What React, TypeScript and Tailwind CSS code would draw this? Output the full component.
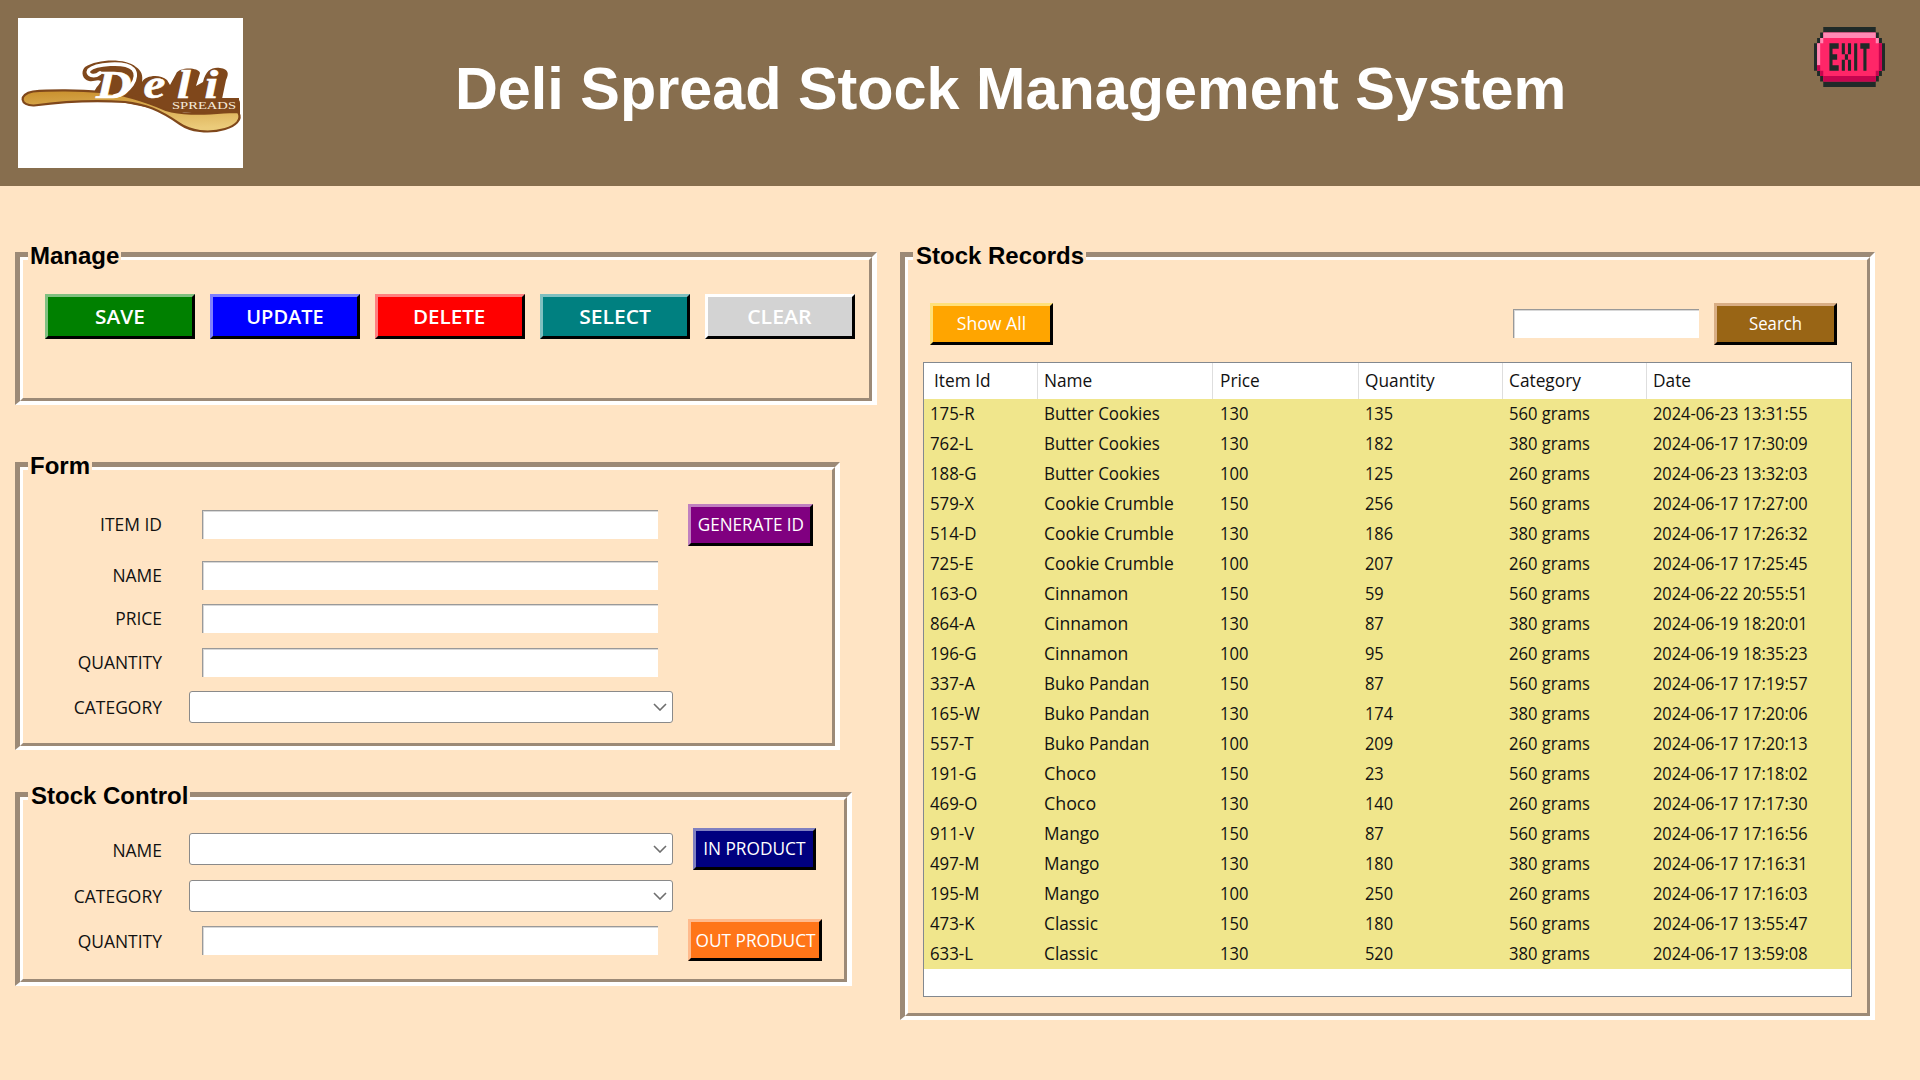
import type { ReactNode } from "react";

const rows: string[][] = [
  ["175-R", "Butter Cookies", "130", "135", "560 grams", "2024-06-23 13:31:55"],
  ["762-L", "Butter Cookies", "130", "182", "380 grams", "2024-06-17 17:30:09"],
  ["188-G", "Butter Cookies", "100", "125", "260 grams", "2024-06-23 13:32:03"],
  ["579-X", "Cookie Crumble", "150", "256", "560 grams", "2024-06-17 17:27:00"],
  ["514-D", "Cookie Crumble", "130", "186", "380 grams", "2024-06-17 17:26:32"],
  ["725-E", "Cookie Crumble", "100", "207", "260 grams", "2024-06-17 17:25:45"],
  ["163-O", "Cinnamon", "150", "59", "560 grams", "2024-06-22 20:55:51"],
  ["864-A", "Cinnamon", "130", "87", "380 grams", "2024-06-19 18:20:01"],
  ["196-G", "Cinnamon", "100", "95", "260 grams", "2024-06-19 18:35:23"],
  ["337-A", "Buko Pandan", "150", "87", "560 grams", "2024-06-17 17:19:57"],
  ["165-W", "Buko Pandan", "130", "174", "380 grams", "2024-06-17 17:20:06"],
  ["557-T", "Buko Pandan", "100", "209", "260 grams", "2024-06-17 17:20:13"],
  ["191-G", "Choco", "150", "23", "560 grams", "2024-06-17 17:18:02"],
  ["469-O", "Choco", "130", "140", "260 grams", "2024-06-17 17:17:30"],
  ["911-V", "Mango", "150", "87", "560 grams", "2024-06-17 17:16:56"],
  ["497-M", "Mango", "130", "180", "380 grams", "2024-06-17 17:16:31"],
  ["195-M", "Mango", "100", "250", "260 grams", "2024-06-17 17:16:03"],
  ["473-K", "Classic", "150", "180", "560 grams", "2024-06-17 13:55:47"],
  ["633-L", "Classic", "130", "520", "380 grams", "2024-06-17 13:59:08"],
];

const columns = "grid grid-cols-[114px_175px_146px_144px_144px_1fr]";

const nameWidths: Record<string, string> = {
  "Butter Cookies": "scale-x-[0.94]",
  "Cookie Crumble": "scale-x-[0.97]",
  Cinnamon: "scale-x-[0.975]",
  "Buko Pandan": "scale-x-[0.945]",
  Choco: "scale-x-[0.99]",
  Mango: "scale-x-[0.96]",
  Classic: "scale-x-[0.96]",
};

const columnWidths = [
  "scale-x-[0.935]",
  "",
  "scale-x-[0.92]",
  "scale-x-[0.91]",
  "scale-x-[0.92]",
  "scale-x-[0.91]",
];

function Group({
  title,
  className,
  legend = "pl-[2px]",
  children,
}: {
  title: string;
  className: string;
  legend?: string;
  children: ReactNode;
}) {
  return (
    <section
      className={`relative border-t-[5px] border-l-[5px] border-r-[5px] border-b-[4px] border-t-[#9c8a77] border-l-[#9c8a77] border-r-white border-b-white ${className}`}
    >
      <h2
        className={`absolute -top-[16px] left-[8px] h-[30px] bg-[#ffe4c4] pr-[2px] font-['Liberation_Sans',sans-serif] text-[24px] leading-[30px] font-bold whitespace-nowrap text-black ${legend}`}
      >
        {title}
      </h2>
      <div className="h-full border-[3px] border-t-white border-l-white border-r-[#9c8a77] border-b-[#9c8a77]">
        {children}
      </div>
    </section>
  );
}

function Button({ className, text = "", children }: { className: string; text?: string; children: string }) {
  return (
    <button
      className={`flex shrink-0 items-center justify-center border-[3px] border-r-black border-b-black whitespace-nowrap text-white ${className}`}
    >
      <span className={`block ${text}`}>{children}</span>
    </button>
  );
}

function Label({ className = "", children }: { className?: string; children: string }) {
  return (
    <label className={`w-[139px] shrink-0 origin-right scale-x-[0.97] text-right ${className}`}>{children}</label>
  );
}

function Entry({ className }: { className: string }) {
  return (
    <div
      className={`h-[29px] shrink-0 border-t border-l border-t-[#999] border-l-[#999] bg-white shadow-[inset_1px_1px_0_#d8d8d8] ${className}`}
    />
  );
}

function Combo() {
  return (
    <div className="ml-[27px] flex h-[32px] w-[484px] shrink-0 items-center justify-end rounded-[3px] border border-[#8a8a8a] bg-white pr-[5px]">
      <svg width="14" height="8" viewBox="0 0 14 8" fill="none" stroke="#6e6e6e" strokeWidth="1.6">
        <path d="M1 1l6 6 6-6" />
      </svg>
    </div>
  );
}

function Logo() {
  return (
    <svg width="225" height="150" viewBox="18 18 225 150" className="bg-white">
      <defs>
        <linearGradient id="gold" x1="0" y1="0" x2="0.15" y2="1">
          <stop offset="0" stopColor="#c98f2c" />
          <stop offset="1" stopColor="#ebcb7a" />
        </linearGradient>
      </defs>
      <path
        d="M95 90C97 86 100 84 101 81C97 79 94 82 89 81C83 80 80 72 85 67C98 59 125 58 136 67C142 71 143 76 142 82C146 75 160 74 167 80L170 85L176 74C179 67 198 67 200 73L196 86L203 82C206 70 212 67 220 68C229 69 229 74 226 80L222 99H236Q240 99 240 103V118L200 114L150 108L92 96Z"
        fill="#7f471b"
      />
      <path
        d="M33 91.500C50 90 80 90 100 92C125 94 145 101 166 110C188 117 215 112 238 112C243 120 235 126 225 129C208 134 190 131 180 124C160 110 145 104 125 102C95 100 60 102 34 105.500C20 106 18 94 33 91.500Z"
        fill="url(#gold)"
        stroke="#7f471b"
        strokeWidth="2.200"
      />
      <path d="M150 92L170 98H239V112H174L130 97Z" fill="#7f471b" />
      <path
        d="M100 73C94 78 86 75 89 70C95 64 125 61 133 69C140 77 130 93 114 96"
        fill="none"
        stroke="#fff"
        strokeWidth="3.600"
        strokeLinecap="round"
      />
      <text
        transform="translate(96 97.500) scale(1.2 1)"
        x="0 39.500 67.500 90.500"
        y="0"
        fontSize="41"
        fill="#fff"
        stroke="#fff"
        strokeWidth="0.600"
        fontFamily="'Liberation Serif', serif"
        fontStyle="italic"
        fontWeight="700"
      >
        Deli
      </text>
      <text
        x="172"
        y="109"
        fontSize="10.500"
        fill="#f6ead8"
        fontFamily="'Liberation Serif', serif"
        textLength="64"
        lengthAdjust="spacingAndGlyphs"
      >
        SPREADS
      </text>
    </svg>
  );
}

function ExitBadge() {
  return (
    <svg width="71" height="60" viewBox="0 0 23 11" preserveAspectRatio="none" role="img" aria-label="Exit">
      <path d="M3 0H20V1H21V2H22V3H23V8H22V9H21V10H20V11H3V10H2V9H1V8H0V3H1V2H2V1H3Z" fill="#1f2a28" />
      <path d="M3 1H20V2H21V3H22V8H21V9H20V10H3V9H2V8H1V3H2V2H3Z" fill="#ff2668" />
      <path d="M3 1H20V2H3ZM2 2H3V3H2ZM20 2H21V3H20ZM1 3H2V7H1Z" fill="#ff8ab5" />
      <path d="M3 9H20V10H3ZM2 8H3V9H2ZM1 7H2V8H1ZM20 8H21V9H20ZM21 3H22V8H21Z" fill="#c6054f" />
      <g fill="#1f2a28">
        <path d="M5 3H8V4H6V5H7.500V6H6V7H8V8H5Z" />
        <path d="M9 3H10V5H11V3H12V5H11V6H12V8H11V6H10V8H9V6H10V5H9Z" />
        <path d="M13 3H14V8H13Z" />
        <path d="M15 3H18V4H17V8H16V4H15Z" />
      </g>
    </svg>
  );
}

export default function App() {
  return (
    <div className="h-[1080px] w-[1920px] overflow-hidden bg-[#ffe4c4] font-['Open_Sans','Noto_Sans',sans-serif] text-[18px] leading-[30px] text-[#111]">
      <header className="flex h-[186px] items-start bg-[#876e4e] pt-[18px] pl-[18px]">
        <Logo />
        <h1 className="mt-[36px] ml-[212px] w-[1110px] shrink-0 font-['Liberation_Sans',sans-serif] text-[60px] leading-[70px] font-bold whitespace-nowrap text-white">
          <span className="inline-block origin-left scale-x-[0.989]">Deli Spread Stock Management System</span>
        </h1>
        <div className="mt-[9px] ml-[249px]">
          <ExitBadge />
        </div>
      </header>

      <main className="flex items-start gap-[23px] pt-[66px] pl-[15px]">
        <div className="flex w-[862px] flex-col">
          <Group title="Manage" className="h-[153px] w-[862px]">
            <div className="flex gap-[15px] pt-[34px] pl-[22px] text-[20px] font-semibold">
              <Button
                className="h-[45px] w-[150px] border-t-[#80c080] border-l-[#80c080] bg-[#008000]"
                text="scale-x-[1.04]"
              >
                SAVE
              </Button>
              <Button className="h-[45px] w-[150px] border-t-[#8080ff] border-l-[#8080ff] bg-[#0000ff]">UPDATE</Button>
              <Button
                className="h-[45px] w-[150px] border-t-[#ff8080] border-l-[#ff8080] bg-[#ff0000] pr-[2px]"
                text="scale-x-[1.03]"
              >
                DELETE
              </Button>
              <Button
                className="h-[45px] w-[150px] border-t-[#80c0c0] border-l-[#80c0c0] bg-[#008080]"
                text="scale-x-[1.05]"
              >
                SELECT
              </Button>
              <Button
                className="h-[45px] w-[150px] border-t-white border-l-white bg-[#d3d3d3] pr-[2px]"
                text="scale-x-[1.06]"
              >
                CLEAR
              </Button>
            </div>
          </Group>

          <Group title="Form" className="mt-[57px] h-[288px] w-[825px]">
            <div className="mt-[34px] flex h-[42px] items-center">
              <Label className="scale-x-[0.94] pb-[2px]">ITEM ID</Label>
              <Entry className="mb-px ml-[40px] w-[456px]" />
              <Button
                className="ml-[30px] h-[42px] w-[125px] border-t-[#c080c0] border-l-[#c080c0] bg-[#800080] pb-[2px]"
                text="scale-x-[0.95]"
              >
                GENERATE ID
              </Button>
            </div>
            <div className="mt-[15px] flex h-[29px] items-center">
              <Label className="pb-[2px]">NAME</Label>
              <Entry className="ml-[40px] w-[456px]" />
            </div>
            <div className="mt-[14px] flex h-[29px] items-center">
              <Label className="pb-[2px]">PRICE</Label>
              <Entry className="ml-[40px] w-[456px]" />
            </div>
            <div className="mt-[15px] flex h-[29px] items-center">
              <Label className="pb-[2px]">QUANTITY</Label>
              <Entry className="ml-[40px] w-[456px]" />
            </div>
            <div className="mt-[14px] flex h-[32px] items-center">
              <Label>CATEGORY</Label>
              <Combo />
            </div>
          </Group>

          <Group title="Stock Control" legend="pl-[3px]" className="mt-[42px] h-[194px] w-[837px]">
            <div className="mt-[28px] flex h-[42px] items-center">
              <Label className="pt-[2px]">NAME</Label>
              <Combo />
              <Button
                className="ml-[20px] h-[42px] w-[123px] border-t-[#8080c0] border-l-[#8080c0] bg-[#000080] pb-[2px]"
                text="scale-x-[0.96]"
              >
                IN PRODUCT
              </Button>
            </div>
            <div className="mt-[10px] flex h-[32px] items-center">
              <Label>CATEGORY</Label>
              <Combo />
            </div>
            <div className="mt-[7px] flex h-[42px] items-center">
              <Label className="pt-[2px]">QUANTITY</Label>
              <Entry className="mt-px ml-[40px] w-[456px]" />
              <Button
                className="ml-[30px] h-[42px] w-[134px] border-t-[#ffba8c] border-l-[#ffba8c] bg-[#ff7518] pl-[2px]"
                text="scale-x-[0.96]"
              >
                OUT PRODUCT
              </Button>
            </div>
          </Group>
        </div>

        <Group title="Stock Records" legend="pl-[3px]" className="h-[768px] w-[975px]">
          <div className="mt-[43px] flex h-[42px] items-center pr-[30px] pl-[22px]">
            <Button
              className="h-[42px] w-[123px] border-t-[#ffe07a] border-l-[#ffe07a] bg-[#ffa500] pb-[2px]"
              text="scale-x-[0.98]"
            >
              Show All
            </Button>
            <Entry className="mb-px ml-auto w-[186px]" />
            <Button
              className="ml-[15px] h-[42px] w-[123px] border-t-[#d9ae85] border-l-[#d9ae85] bg-[#996515] pb-[2px]"
              text="scale-x-[0.93]"
            >
              Search
            </Button>
          </div>
          <div className="mt-[17px] ml-[15px] h-[635px] w-[929px] border border-[#83888f] bg-white">
            <div className={`h-[36px] ${columns} leading-[34px]`}>
              {["Item Id", "Name", "Price", "Quantity", "Category", "Date"].map((h, i) => (
                <div
                  key={h}
                  className={
                    i === 0
                      ? "border-r border-[#dedede] pl-[10px]"
                      : i === 5
                        ? "pl-[6px]"
                        : i === 2
                          ? "border-r border-[#dedede] pl-[7px]"
                          : "border-r border-[#dedede] pl-[6px]"
                  }
                >
                  <span className="inline-block origin-left scale-x-[0.96]">{h}</span>
                </div>
              ))}
            </div>
            {rows.map((r) => (
              <div key={r[0]} className={`h-[30px] bg-[#f0e68c] ${columns} leading-[28px] whitespace-nowrap`}>
                {r.map((c, i) => (
                  <div key={i} className={i === 2 ? "pl-[7px]" : "pl-[6px]"}>
                    <span className={`inline-block origin-left ${i === 1 ? nameWidths[c] : columnWidths[i]}`}>{c}</span>
                  </div>
                ))}
              </div>
            ))}
          </div>
        </Group>
      </main>
    </div>
  );
}
